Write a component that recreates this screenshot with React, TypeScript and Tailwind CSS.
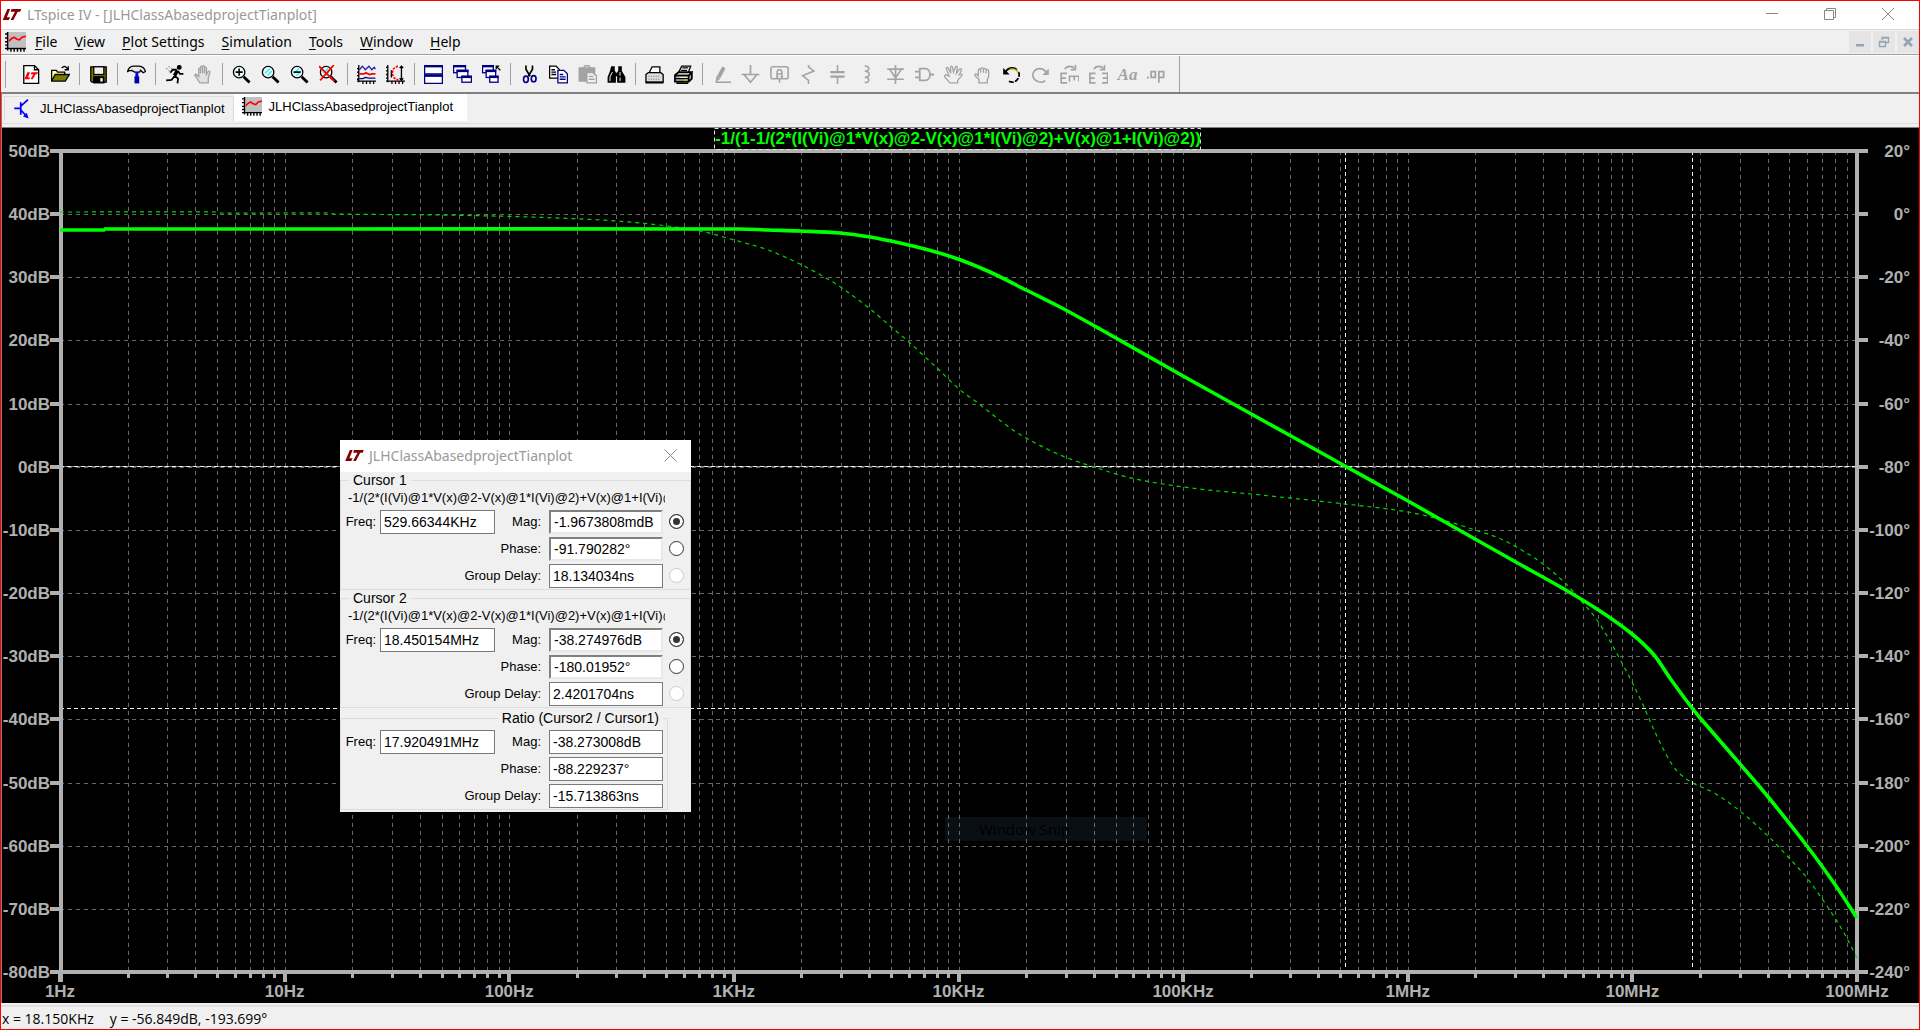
import React from 'react'

type Point = [number, number]

const GRAY = '#a3a3a3'
const NAVY = '#000084'
const AXIS = '#b0b0b0'
const GREEN = '#00ff00'

/* ---------- icons ---------- */

const Svg = ({ children, className = 'h-[19px] w-[19px]' }: { children: React.ReactNode; className?: string }) => (
  <svg viewBox="0 0 16 16" className={className} fill="none" stroke="#000" strokeWidth="1.1" aria-hidden="true">
    {children}
  </svg>
)

const Logo = ({ color = '#800000', className = 'h-[14px] w-[20px]' }: { color?: string; className?: string }) => (
  <svg viewBox="0 0 20 14" className={className} fill={color} aria-hidden="true">
    <path d="M5 1h3L4.500 10H8l-1.500 3H0z" />
    <path d="M9.500 1H20l-1.200 3h-2.600L11.500 13H8.500l4.700-9H8.500z" />
  </svg>
)

const PlotIcon = ({ className = 'h-[21px] w-[21px]' }: { className?: string }) => (
  <Svg className={className}>
    <rect x="2" y="0" width="14" height="12" fill="#c0c0c0" stroke="none" />
    <path d="M2 0v14M0 12.5h16M0 1.5h2M0 4.5h2M0 7.5h2M0 10h2M4.5 12v3M7 12v3M9.500 12v3M12 12v3M14.500 12v3" />
    <path d="M3 7l2-2 2-1 2 1.500 2 .5 2-2 3-.8" stroke="#f00" strokeWidth="1.3" />
  </Svg>
)

const TransistorIcon = () => (
  <Svg className="h-[20px] w-[20px]">
    <path d="M1 7.500h5M6.200 2.500v10M6.500 5.500l5.500-5M6.500 9l5 5.500" stroke="#00f" strokeWidth="1.4" />
    <path d="M12.500 15.500l-4.500-1.500 3-3z" fill="#00f" stroke="none" />
  </Svg>
)

const Lens = ({ children, hilite = true }: { children?: React.ReactNode; hilite?: boolean }) => (
  <Svg>
    <circle cx="6" cy="6" r="4.800" fill="#e9ffff" />
    {hilite && <path d="M3.500 7l4-4M5.500 9l3.500-4" stroke="#40e8f0" strokeWidth="1.300" />}
    <path d="M9.800 9.800l5 5" strokeWidth="2.400" />
    {children}
  </Svg>
)

const MiniWindow = ({ x, y, w = 8, h = 6 }: { x: number; y: number; w?: number; h?: number }) => (
  <g stroke={NAVY}>
    <rect x={x + 0.5} y={y + 0.5} width={w} height={h} fill="#fff" />
    <path d={`M${x} ${y + 1}h${w + 1}`} strokeWidth="2" />
  </g>
)

const handPath =
  'M5 15l-3-4.500-1.500-2 1-.8 2.500 2V3.500c0-1 1.500-1 1.500 0V7 1.800c0-1 1.700-1 1.700 0V7 1.300c0-1 1.700-1 1.700 0V7 2.500c0-1 1.600-1 1.600 0V8l1.500-2.500c1-.8 1.600 0 1.300.8L12 11.500V15z'

const fistPath =
  'M5 15v-3L2 9.500C1 8 2 7 3.500 8L4.500 9V4.500C4.500 3 6.500 3 6.500 4.500v2-3C6.500 2 8.800 2 8.800 3.500v3-2.500c0-1.500 2.200-1.500 2.200 0v3-2c0-1.500 2.200-1.500 2.200 0v4.500c0 1-1.200 2-1.200 3V15z'

type Tool = { name: string; icon: React.ReactNode } | null

const tools: Tool[] = [
  {
    name: 'New Schematic',
    icon: (
      <Svg>
        <path d="M1.500.5h9l3.500 3.500v11.500h-12.500z" fill="#fff" />
        <path d="M10.500.5v3.500h3.500" />
        <path d="M4.500 6h2.300l-1.800 4.500h2L6.300 12H2zM8 6h5.500l-.7 1.700h-1.300L9 12H7.300l2.200-4.300H7.300z" fill="#f00" stroke="none" />
      </Svg>
    ),
  },
  {
    name: 'Open',
    icon: (
      <Svg>
        <path d="M.5 13.500v-9h4l1 1.500h6v2.500" fill="#ffff9c" />
        <path d="M.5 13.500l3-5.500h12l-3.500 5.500z" fill="#7b7b00" />
        <path d="M9 2.500c2-2 4-1.500 5 1M14.500 1v3h-3" />
      </Svg>
    ),
  },
  null,
  {
    name: 'Save',
    icon: (
      <Svg>
        <path d="M1.500 1.500h13v13h-12l-1-1z" fill="#7b7b00" />
        <rect x="4" y="1.500" width="8.500" height="6.500" fill="#efefef" />
        <rect x="4" y="10" width="8.500" height="5" fill="#000" />
        <rect x="9.500" y="11" width="2" height="3" fill="#efefef" stroke="none" />
      </Svg>
    ),
  },
  null,
  {
    name: 'Control Panel',
    icon: (
      <Svg>
        <path d="M.5 5.500C1 3 3 1 6 1h4c3 .3 5 2 5.500 4.500l-2 1-2-2-1 1.500h-4L4 4.500l-2 .3z" fill="#e8e8e8" />
        <path d="M8.300 6v4" stroke="#00f" strokeWidth="2.500" />
        <path d="M8.300 9.500v6" stroke="#0000b0" strokeWidth="4" />
      </Svg>
    ),
  },
  null,
  {
    name: 'Run',
    icon: (
      <Svg>
        <circle cx="12" cy="2" r="1.500" fill="#000" />
        <path d="M10.500 4.500L8 9" strokeWidth="3" />
        <path d="M10 4H6.500L4.500 6.500M11 5l1.500 2.500h3M8 9l3 2.500-.5 4M8 9.500l-2.500 3-4.500.5" strokeWidth="1.500" />
        <path d="M1 3h1M3 1.500h1M5 3h1M3 5h1" stroke="#777" />
      </Svg>
    ),
  },
  { name: 'Halt', icon: <Svg><path d={handPath} stroke={GRAY} fill="#e2e2e2" /></Svg> },
  null,
  { name: 'Zoom In', icon: <Lens hilite={false}><path d="M6 3v6M3 6h6" strokeWidth="1.300" /></Lens> },
  { name: 'Pan', icon: <Lens /> },
  { name: 'Zoom Out', icon: <Lens><path d="M3 6h6" strokeWidth="1.400" /></Lens> },
  {
    name: 'Zoom Full',
    icon: <Lens><path d="M0 1l13 12.500M12.500 0L1 13" stroke="#f00" strokeWidth="1.500" /></Lens>,
  },
  null,
  {
    name: 'Autorange',
    icon: (
      <Svg>
        <path d="M1.500 0v14.500M0 13.500h16M0 3h1M0 6h1M0 9h1M0 12h1M5 13v3M8 13v3M11 13v3M14 13v3" />
        <path d="M2 4l2.500-3 2.500 3 3-3 2.500 3 2-2 1 1.500" stroke="#2020b0" />
        <path d="M2 7.500h4l1.500-1 3 1.500 2-.5h3" stroke="#f00" strokeWidth="1.500" />
        <path d="M2 11.500h3l2-1 3 .5h5.500" stroke={NAVY} />
      </Svg>
    ),
  },
  {
    name: 'Plot Limits',
    icon: (
      <Svg>
        <path d="M1.500 0v14.500M0 13.500h16M0 2h1M0 5h1M0 8h1M0 11h1M5 13v3M8 13v3M11 13v3M14 13v3" />
        <path d="M4.500 4.500v6M13 1v12M11.500 2.500L13 1l1.500 1.500M11.500 11l1.500 2 1.500-2" />
        <path d="M10 .8L6.500 3 5 7l2 4 3.500 2" stroke="#f00" strokeDasharray="2 1" strokeWidth="1.400" />
      </Svg>
    ),
  },
  null,
  {
    name: 'Tile',
    icon: (
      <Svg>
        <MiniWindow x={0} y={0} w={15} h={7} />
        <MiniWindow x={0} y={8} w={15} h={7} />
      </Svg>
    ),
  },
  {
    name: 'Cascade',
    icon: (
      <Svg>
        <MiniWindow x={0} y={0} w={10} />
        <MiniWindow x={3} y={4} w={9} />
        <MiniWindow x={7} y={9} w={8} h={5} />
      </Svg>
    ),
  },
  {
    name: 'Close All',
    icon: (
      <Svg>
        <MiniWindow x={0} y={0} w={9} />
        <MiniWindow x={3} y={4} w={8} />
        <MiniWindow x={6} y={9} w={7} h={5} />
        <path d="M11.500 1h3M12 .5v3M12 1l3.500 3.500" />
      </Svg>
    ),
  },
  null,
  {
    name: 'Cut',
    icon: (
      <Svg>
        <path d="M5 .5v3l3.500 6M10.500 .5v3L7 9.500" strokeWidth="1.400" />
        <ellipse cx="5" cy="12" rx="2" ry="2.600" stroke={NAVY} strokeWidth="1.400" />
        <ellipse cx="11.500" cy="11.500" rx="2" ry="2.600" stroke={NAVY} strokeWidth="1.400" />
      </Svg>
    ),
  },
  {
    name: 'Copy',
    icon: (
      <Svg>
        <path d="M.5 1h5.500l2.500 2.500V11H.5z" fill="#fff" />
        <path d="M2 4h3M2 6h4M2 8h4" />
        <path d="M7.500 4.500h5L15.500 7.500V15h-8z" fill="#fff" stroke={NAVY} />
        <path d="M9 8h3M9 10h5M9 12h5" stroke={NAVY} />
      </Svg>
    ),
  },
  {
    name: 'Paste',
    icon: (
      <Svg>
        <path d="M1 2.500h13v11H1z" fill={GRAY} stroke={GRAY} />
        <path d="M4.500 2.500L6 .5h3l1.500 2z" fill="#e0e0e0" stroke={GRAY} />
        <path d="M7.500 6.500h5l3 2.500v6h-8z" fill="#f0f0f0" stroke={GRAY} />
        <path d="M9 9.500h4M9 12h5" stroke={GRAY} />
      </Svg>
    ),
  },
  {
    name: 'Find',
    icon: (
      <Svg>
        <path d="M3.500 1h3v3.500l1 2V15H.5V10L2.500 5zM9.500 1h3v4l3 5v5H8.500V6.500l1-2z" fill="#000" stroke="none" />
        <path d="M4.500 6L2.500 10v3.500M11 6v3M11 10.500v3" stroke="#fff" strokeWidth=".8" />
        <path d="M6 8h4" strokeWidth="3" />
      </Svg>
    ),
  },
  null,
  {
    name: 'Print Setup',
    icon: (
      <Svg>
        <path d="M3.500 6.500L6 1.500h6.500V7" fill="#fff" />
        <path d="M.8 8l2-1.500h10.500l2 1.500v6.500H.8z" fill="#ddd" />
        <path d="M3 9.500h10M3 12h10" stroke="#999" strokeDasharray="1 1" />
        <path d="M.5 14.800h15" strokeWidth="1.600" />
      </Svg>
    ),
  },
  {
    name: 'Print',
    icon: (
      <Svg>
        <path d="M4 6L6.500 1h7.500l-2 5.500" fill="#fff" />
        <path d="M7 2.500h5M6 4.500h5" />
        <path d="M.8 8.500l3-2.500H15l-2.500 3H.8v5h11.500V9L15 6.500v5L12.500 14" fill="#bbb" strokeWidth="1.500" />
        <path d="M1 11.500h11" />
        <path d="M8 12.800h3" stroke="#d0a000" strokeWidth="1.500" />
        <path d="M2 15.300h10" strokeWidth="1.400" />
      </Svg>
    ),
  },
  null,
  {
    name: 'Wire',
    icon: (
      <Svg>
        <path d="M5.500 10.500L10 2" stroke={GRAY} strokeWidth="3.200" />
        <path d="M3 14.500l.7-5 3.300 2z" fill={GRAY} stroke="none" />
        <path d="M3 14.500h14" stroke={GRAY} strokeWidth="1.300" />
      </Svg>
    ),
  },
  { name: 'Ground', icon: <Svg><path d="M8 0v8M.5 8h15M2.500 8l5.500 6.500L13.500 8" stroke={GRAY} strokeWidth="1.400" /></Svg> },
  {
    name: 'Label Net',
    icon: (
      <Svg>
        <rect x=".8" y="1.500" width="14.500" height="10" rx="1.500" stroke={GRAY} strokeWidth="1.300" />
        <path d="M8 11.500V15M6 10V5.500L7 4h2l1 1.500V10M6 7.500h4M5 10h2M9 10h2" stroke={GRAY} strokeWidth="1.300" />
      </Svg>
    ),
  },
  { name: 'Resistor', icon: <Svg><path d="M8 0v1.500l4.500 3.500L3 9l5 4v3" stroke={GRAY} strokeWidth="1.300" /></Svg> },
  {
    name: 'Capacitor',
    icon: (
      <Svg>
        <path d="M8 0v6M8 9.500V16" stroke={GRAY} strokeWidth="1.300" />
        <path d="M2 6h12M2 9.800h12" stroke={GRAY} strokeWidth="2" />
      </Svg>
    ),
  },
  {
    name: 'Inductor',
    icon: <Svg><path d="M6.500.8c4.500 0 4.500 4.500 0 4.500 5 0 5 5 0 5 4.500 0 4.500 4.500 0 4.500" stroke={GRAY} strokeWidth="1.300" /></Svg>,
  },
  { name: 'Diode', icon: <Svg><path d="M8 0v16M1 3.500h14M3 3.500L8 11l5-7.500M1 12h14" stroke={GRAY} strokeWidth="1.400" /></Svg> },
  {
    name: 'Component',
    icon: <Svg><path d="M4 3h4.500c5.500 0 5.500 10 0 10H4zM0 5.500h4M0 10.500h4M12.500 8H16" stroke={GRAY} strokeWidth="1.500" /></Svg>,
  },
  {
    name: 'Move',
    icon: (
      <Svg>
        <path
          d="M5 15l-3.500-4-1.200-1.500 1-1.500 3 1.500L2 3.500C1.700 2 3 1.500 3.700 3l2 4L5.500 2c0-1.300 1.500-1.300 1.700 0l.8 4L9.500 2c.5-1.300 1.900-.8 1.600.3L10.500 7l2.600-3.500c.8-.8 2 0 1.500 1L13 8l1-.5c1 0 1.500.8 1 1.500L11.500 13v2z"
          stroke={GRAY}
        />
      </Svg>
    ),
  },
  { name: 'Drag', icon: <Svg><path d={fistPath} stroke={GRAY} /></Svg> },
  {
    name: 'Undo',
    icon: (
      <Svg>
        <path d="M2.500 7c1.500-4.500 7-6 10-3" stroke="#000" strokeWidth="1.500" />
        <path d="M6 4c3-1.500 6-.5 7.500 2" stroke="#c0b000" strokeWidth="1.200" />
        <path d="M14 6c1.500 3.500-1 8-5 8.500-1.500 0-2.500-.3-3.500-1" strokeWidth="1.500" strokeDasharray="4 1.200" />
        <path d="M1 2.500V8h5.500z" fill="#000" stroke="none" />
      </Svg>
    ),
  },
  {
    name: 'Redo',
    icon: (
      <Svg>
        <path d="M12.500 6C10.500 2 4 2 2 6.500S5 15 9 14.500c1 0 2-.5 3-1.200" stroke={GRAY} strokeWidth="1.400" />
        <path d="M15 3v5.500H9.500z" fill={GRAY} stroke="none" />
      </Svg>
    ),
  },
  {
    name: 'Rotate',
    icon: (
      <Svg>
        <path d="M4 3.500C6 .5 10 .5 12 3M13 0v4H9M6 7H1v8h5M1 11h4" stroke={GRAY} strokeWidth="1.400" />
        <path d="M8 14V9.500h8V14M12 9.500v3.500" stroke={GRAY} strokeWidth="1.400" />
      </Svg>
    ),
  },
  {
    name: 'Mirror',
    icon: (
      <Svg>
        <path d="M4 3.500C6 .5 10 .5 12 3M13 0v4H9M5.500 7H.8v8h4.700M.8 11h4M11 7h4.700v8H11M15.500 11h-4" stroke={GRAY} strokeWidth="1.400" />
      </Svg>
    ),
  },
  {
    name: 'Text',
    icon: <span className="font-[Liberation_Serif,serif] text-[17px] leading-[19px] font-bold text-[#a3a3a3] italic">Aa</span>,
  },
  {
    name: 'SPICE Directive',
    icon: (
      <Svg>
        <path d="M0 10.500h1.500" stroke={GRAY} strokeWidth="1.600" />
        <path d="M3.500 5.500h3.500v5H3.500zM10 15V5.500h4v5h-4" stroke={GRAY} strokeWidth="1.500" />
      </Svg>
    ),
  },
]

/* ---------- plot ---------- */

const LEFT = 60
const RIGHT = 1857
const TOP = 151
const BOTTOM = 972
const DECADE = (RIGHT - LEFT) / 8
const ROW = (BOTTOM - TOP) / 13

const dbLabels = ['50dB', '40dB', '30dB', '20dB', '10dB', '0dB', '-10dB', '-20dB', '-30dB', '-40dB', '-50dB', '-60dB', '-70dB', '-80dB']
const phaseLabels = ['20°', '0°', '-20°', '-40°', '-60°', '-80°', '-100°', '-120°', '-140°', '-160°', '-180°', '-200°', '-220°', '-240°']
const freqLabels = ['1Hz', '10Hz', '100Hz', '1KHz', '10KHz', '100KHz', '1MHz', '10MHz', '100MHz']

const magnitude: Point[] = [
  [104, 229], [740, 229], [768, 230], [800, 231], [840, 233], [870, 237], [900, 243], [925, 249], [958, 259], [990, 272],
  [1026, 290], [1060, 307], [1100, 329], [1183, 376], [1345, 466], [1408, 501], [1475, 539], [1514, 561], [1564, 589],
  [1600, 611], [1632, 634], [1654, 655], [1672, 681], [1692, 708], [1701, 719], [1740, 764], [1769, 798], [1807, 846],
  [1836, 886], [1857, 918],
]

const phase: Point[] = [
  [60, 212], [218, 212], [219, 213], [330, 213], [334, 214], [440, 215], [530, 217], [600, 220], [650, 224], [700, 231],
  [734, 240], [768, 250], [800, 264], [826, 278], [842, 288], [869, 308], [890, 326], [909, 342], [924, 356], [937, 368],
  [959, 389], [978, 403], [997, 418], [1013, 430], [1028, 439], [1045, 448], [1065, 457], [1097, 468], [1127, 477],
  [1163, 484], [1208, 490], [1251, 494], [1345, 504], [1408, 512], [1446, 521], [1475, 530], [1501, 539], [1525, 552],
  [1543, 564], [1564, 582], [1583, 603], [1597, 620], [1610, 641], [1622, 663], [1632, 682], [1644, 707], [1654, 730],
  [1667, 756], [1677, 771], [1691, 782], [1714, 793], [1740, 811], [1769, 837], [1790, 859], [1807, 878], [1827, 906],
  [1844, 933], [1857, 958],
]

// Monotone-in-x cubic through the samples
const toPath = (points: Point[]) => {
  const slope = (i: number) => {
    const a = points[Math.max(i - 1, 0)]
    const b = points[Math.min(i + 1, points.length - 1)]
    return (b[1] - a[1]) / (b[0] - a[0])
  }

  return points.reduce((path, [x, y], i) => {
    if (i === 0) return `M${x} ${y}`
    const [px, py] = points[i - 1]
    const third = (x - px) / 3
    return `${path}C${px + third} ${py + slope(i - 1) * third} ${x - third} ${y - slope(i) * third} ${x} ${y}`
  }, '')
}

const rowY = (i: number) => Math.round(TOP + i * ROW)
const freqX = (decade: number, n: number) => Math.round(LEFT + (decade + Math.log10(n)) * DECADE)

const decades = [0, 1, 2, 3, 4, 5, 6, 7]
const steps = [1, 2, 3, 4, 5, 6, 7, 8, 9]

const Plot = () => (
  <svg viewBox="2 128 1917 875" className="block h-auto w-full" role="img" aria-label="Loop gain magnitude and phase">
    <rect x="2" y="128" width="1917" height="875" fill="#000" />

    {/* Fading menu highlight */}
    <rect x="945" y="817" width="202" height="24" fill="#0a0f14" />
    <text x="979" y="835" fontSize="15" fill="#000" className="font-['Open_Sans',sans-serif]">
      Window Snip
    </text>

    <g stroke="#686868" strokeDasharray="4 4" shapeRendering="crispEdges">
      {decades.map((d) =>
        steps.map((n) => (
          <path key={`${d}-${n}`} d={`M${freqX(d, n) + 0.5} ${TOP}V${BOTTOM}`} />
        )),
      )}
      {dbLabels.map((label, i) => (
        <path key={label} d={`M${LEFT} ${rowY(i) + 0.5}H${RIGHT}`} />
      ))}
    </g>

    {/* Attached cursors */}
    <g stroke="#f0f0f0" strokeDasharray="4 3" shapeRendering="crispEdges">
      <path d={`M${LEFT} 466.500H${RIGHT}`} stroke="#808080" strokeDasharray="none" />
      <path d={`M${LEFT} 466.500H${RIGHT}`} />
      <path d={`M${LEFT} 708.500H${RIGHT}`} />
      <path d={`M1345.500 ${TOP}V${BOTTOM}`} />
      <path d={`M1692.500 ${TOP}V${BOTTOM}`} />
    </g>

    {/* Frame and ticks */}
    <g stroke={AXIS} strokeWidth="4" shapeRendering="crispEdges">
      <path d={`M50 ${TOP}H1868M50 ${BOTTOM}H1868M${LEFT + 1} ${TOP}V982M${RIGHT} ${TOP}V982`} />
      {dbLabels.map((label, i) => (
        <path key={label} d={`M50 ${rowY(i)}H${LEFT}M${RIGHT} ${rowY(i)}H1868`} />
      ))}
      {decades.map((d) =>
        steps.map((n) => (
          <path key={`${d}-${n}`} d={`M${freqX(d, n)} ${BOTTOM}V${n === 1 ? 982 : 978}`} strokeWidth={n === 1 ? 4 : 3} />
        )),
      )}
    </g>

    <g fill="none" stroke={GREEN}>
      <path d={toPath(phase)} stroke="#00d800" strokeWidth="1.200" strokeDasharray="4 4" />
      <path d="M60 230H105" strokeWidth="3.600" />
      <path d={toPath(magnitude)} strokeWidth="3.600" strokeLinejoin="round" />
    </g>

    <g fill={AXIS} fontSize="17" fontWeight="bold" className="font-['Liberation_Sans',sans-serif]">
      {dbLabels.map((label, i) => (
        <text key={label} x="50" y={rowY(i) + 6} textAnchor="end">
          {label}
        </text>
      ))}
      {phaseLabels.map((label, i) => (
        <text key={label} x="1910" y={rowY(i) + 6} textAnchor="end">
          {label}
        </text>
      ))}
      {freqLabels.map((label, i) => (
        <text key={label} x={LEFT + i * DECADE} y="997" textAnchor="middle">
          {label}
        </text>
      ))}
    </g>

    <rect x="714.500" y="128.500" width="486" height="21" fill="none" stroke="#e0e0e0" strokeDasharray="4 3" />
    <text
      x="958"
      y="144"
      textAnchor="middle"
      fontSize="17"
      fontWeight="bold"
      fill={GREEN}
      className="font-['Liberation_Sans',sans-serif]">
      -1/(1-1/(2*(I(Vi)@1*V(x)@2-V(x)@1*I(Vi)@2)+V(x)@1+I(Vi)@2))
    </text>
  </svg>
)

/* ---------- cursor window ---------- */

const cursorFormula = '-1/(2*(I(Vi)@1*V(x)@2-V(x)@1*I(Vi)@2)+V(x)@1+I(Vi)@2))'

const readouts = [
  { id: 'c1', title: 'Cursor 1', freq: '529.66344KHz', mag: '-1.9673808mdB', phase: '-91.790282°', delay: '18.134034ns' },
  { id: 'c2', title: 'Cursor 2', freq: '18.450154MHz', mag: '-38.274976dB', phase: '-180.01952°', delay: '2.4201704ns' },
  { id: 'ratio', title: 'Ratio (Cursor2 / Cursor1)', freq: '17.920491MHz', mag: '-38.273008dB', phase: '-88.229237°', delay: '-15.713863ns' },
]

type FieldProps = { id: string; label: string; value: string; sunken?: boolean; labelClass?: string; inputClass?: string }

const Field = ({ id, label, value, sunken = false, labelClass = '', inputClass = '' }: FieldProps) => (
  <>
    <label htmlFor={id} className={`text-right text-[13px] whitespace-nowrap ${labelClass}`}>
      {label}
    </label>
    <input
      id={id}
      defaultValue={value}
      className={`h-6 w-full min-w-0 bg-white px-[3px] text-[14px] ${inputClass} ${
        sunken
          ? 'border-2 border-t-[#808080] border-r-[#e8e8e8] border-b-[#e8e8e8] border-l-[#808080]'
          : 'border border-[#7a7a7a]'
      }`}
    />
  </>
)

const Radio = ({ name, label, checked = false, disabled = false }: { name: string; label: string; checked?: boolean; disabled?: boolean }) => (
  <input
    type="radio"
    name={name}
    aria-label={label}
    defaultChecked={checked}
    disabled={disabled}
    className="h-[15px] w-[15px] appearance-none justify-self-center rounded-full border border-[#333] bg-white checked:bg-[#333] checked:shadow-[inset_0_0_0_3px_white] disabled:border-[#ccc]"
  />
)

const CursorWindow = () => (
  <section className="absolute top-[312px] left-[338px] w-[351px] bg-[#f0f0f0] pb-[2px] font-['Liberation_Sans',sans-serif] text-black">
    <header className="flex h-8 items-center bg-white pb-[2px] pl-[5px]">
      <Logo className="h-[13px] w-[19px]" />
      <h2 className="ml-[5px] font-['Noto_Sans',sans-serif] text-[14px] text-[#999]">JLHClassAbasedprojectTianplot</h2>
      <button aria-label="Close" className="mr-[14px] ml-auto">
        <svg viewBox="0 0 13 13" className="h-[13px] w-[13px]" stroke="#888" fill="none">
          <path d="M.5.5l12 12M12.500.5l-12 12" />
        </svg>
      </button>
    </header>

    {readouts.map((r) => {
      const isRatio = r.id === 'ratio'

      return (
        <fieldset key={r.id} className={isRatio ? 'mr-[23px] min-w-0 border border-[#dcdcdc]' : 'min-w-0 border border-[#dcdcdc]'}>
          <legend className={isRatio ? 'mr-1 ml-auto px-1 text-[14px] leading-5' : 'ml-2 px-1 text-[14px] leading-[17px]'}>
            {r.title}
          </legend>
          {!isRatio && (
            <p className="mb-[2px] ml-[7px] w-[317px] overflow-hidden text-[13px] leading-[17px] whitespace-nowrap">{cursorFormula}</p>
          )}
          <div
            className={
              isRatio
                ? 'grid auto-rows-[27px] grid-cols-[39px_75px_40px_1fr_114px_4px] items-center'
                : 'grid auto-rows-[27px] grid-cols-[39px_75px_40px_1fr_114px_27px] items-center'
            }>
            <Field id={`${r.id}-freq`} label="Freq:" value={r.freq} labelClass="pr-1" inputClass="col-span-2" />
            <Field id={`${r.id}-mag`} label="Mag:" value={r.mag} sunken={!isRatio} labelClass="pr-2" />
            {!isRatio && <Radio name={r.id} label={`${r.title} magnitude`} checked />}
            <Field id={`${r.id}-phase`} label="Phase:" value={r.phase} sunken={!isRatio} labelClass="col-span-2 col-start-3 pr-2" />
            {!isRatio && <Radio name={r.id} label={`${r.title} phase`} />}
            <Field id={`${r.id}-delay`} label="Group Delay:" value={r.delay} labelClass="col-span-2 col-start-3 pr-2" />
            {!isRatio && <Radio name={r.id} label={`${r.title} group delay`} disabled />}
          </div>
        </fieldset>
      )
    })}
  </section>
)

/* ---------- main window ---------- */

const menus = ['File', 'View', 'Plot Settings', 'Simulation', 'Tools', 'Window', 'Help']

const mdiButton = 'flex h-[22px] w-[22px] items-center justify-center bg-[#e5e5e5]'

const App = () => (
  <main className="border border-[#f00] bg-[#f0f0f0] font-['Noto_Sans',sans-serif] text-[14px] text-black select-none">
    <header className="flex h-7 items-center bg-white pb-[2px]">
      <Logo className="ml-px h-[13px] w-[20px]" />
      <h1 className="ml-[5px] text-[14px] text-[#999]">LTspice IV - [JLHClassAbasedprojectTianplot]</h1>
      <div className="ml-auto flex text-[#888]">
        <button aria-label="Minimize" className="flex h-6 w-[58px] items-center justify-center">
          <svg viewBox="0 0 12 12" className="h-3 w-3" stroke="currentColor"><path d="M0 5.500h12" /></svg>
        </button>
        <button aria-label="Restore" className="flex h-6 w-[58px] items-center justify-center">
          <svg viewBox="0 0 12 12" className="h-3 w-3" stroke="currentColor" fill="none">
            <path d="M.5 2.500h9v9h-9zM2.500 2.500v-2h9v9h-2" />
          </svg>
        </button>
        <button aria-label="Close window" className="mr-[2px] flex h-6 w-[58px] items-center justify-center">
          <svg viewBox="0 0 12 12" className="h-3 w-3" stroke="currentColor"><path d="M0 0l12 12M12 0L0 12" /></svg>
        </button>
      </div>
    </header>

    <nav className="flex h-[26px] items-center border-t border-b border-t-[#d8d8d8] border-b-[#a0a0a0] pl-1">
      <PlotIcon />
      <ul className="ml-[9px] flex gap-[17px] pb-[2px]">
        {menus.map((menu) => (
          <li key={menu}>
            <button>
              <span className="underline underline-offset-2">{menu[0]}</span>
              {menu.slice(1)}
            </button>
          </li>
        ))}
      </ul>
      <div className="ml-auto flex gap-[2px]">
        <button aria-label="Minimize document" className={mdiButton}>
          <svg viewBox="0 0 12 12" className="h-3 w-3" fill="#93a5b5"><path d="M2 8h8v2.500H2z" /></svg>
        </button>
        <button aria-label="Restore document" className={mdiButton}>
          <svg viewBox="0 0 12 12" className="h-3 w-3" fill="none" stroke="#93a5b5" strokeWidth="1.300">
            <path d="M1.500 5.500h6v5h-6zM4 4V1.500h6.500v5H8M1.500 6h6M4 2h6.500" />
          </svg>
        </button>
        <button aria-label="Close document" className={mdiButton}>
          <svg viewBox="0 0 12 12" className="h-3 w-3" fill="none" stroke="#93a5b5" strokeWidth="2.600"><path d="M2 2l8 8M10 2l-8 8" /></svg>
        </button>
      </div>
    </nav>

    <div role="toolbar" aria-label="Main" className="flex h-[37px] items-center border-t border-t-white pl-1">
      <span className="h-[27px] w-px bg-[#a0a0a0]" />
      <div className="ml-[11px] flex items-center">
        {tools.map((tool, i) =>
          tool ? (
            <button key={tool.name} aria-label={tool.name} className="flex h-6 w-[29px] items-center justify-center">
              {tool.icon}
            </button>
          ) : (
            <span key={i} className="mr-[4px] ml-[4px] h-[22px] w-px bg-[#a0a0a0]" />
          ),
        )}
      </div>
      <span className="ml-2 h-[36px] w-px bg-[#a0a0a0]" />
    </div>

    <div className="border-t-2 border-l border-[#808080]">
      <div role="tablist" className="flex h-[30px] items-end border-b border-[#dcdcdc] pb-[2px] pl-[2px] font-['Liberation_Sans',sans-serif] text-[13px]">
        <button role="tab" aria-selected="false" className="flex h-[25px] items-center gap-[7px] border border-b-0 border-[#dcdcdc] pr-[8px] pl-[8px]">
          <TransistorIcon />
          JLHClassAbasedprojectTianplot
        </button>
        <button role="tab" aria-selected="true" className="flex h-[27px] items-center gap-[7px] bg-white pr-[14px] pb-[2px] pl-[8px]">
          <PlotIcon className="h-[20px] w-[20px]" />
          JLHClassAbasedprojectTianplot
        </button>
      </div>

      <div className="relative mt-[3px] border-t border-[#808080]">
        <Plot />
        <CursorWindow />
      </div>
    </div>

    <footer className="mt-[2px] flex h-[24px] items-center gap-4 border-t-2 border-[#e0e0e0] pl-px font-['Open_Sans',sans-serif] text-[14px]">
      <span>x = 18.150KHz</span>
      <span>y = -56.849dB, -193.699°</span>
    </footer>
  </main>
)

export default App
